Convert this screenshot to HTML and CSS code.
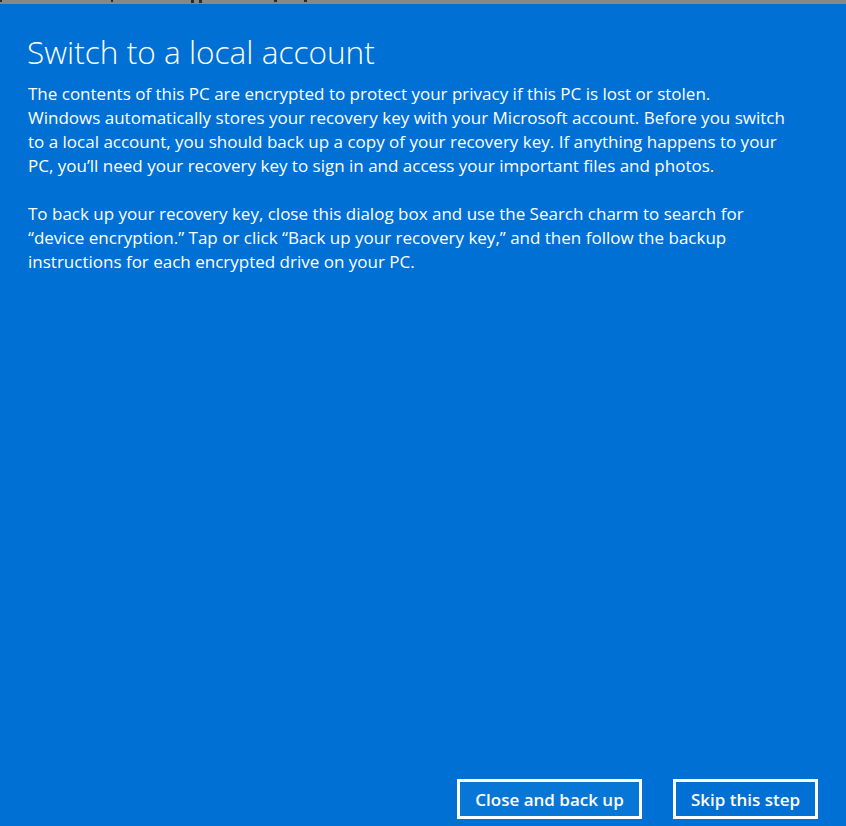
FILE: index.html
```html
<!DOCTYPE html>
<html lang="en">
<head>
<meta charset="utf-8">
<title>Switch to a local account</title>
<link rel="stylesheet" href="styles.css">
</head>
<body>
<div class="topstrip">
  <span class="mark m1"></span>
  <span class="mark m2"></span>
  <span class="mark m3"></span>
  <span class="mark m4"></span>
  <span class="mark m5"></span>
  <span class="mark m6"></span>
</div>
<main class="dialog">
  <h1 class="title">Switch to a local account</h1>
  <div class="content">
    <p>The contents of this PC are encrypted to protect your privacy if this PC is lost or stolen.<br>Windows automatically stores your recovery key with your Microsoft account. Before you switch to a local account, you should back up a copy of your recovery key. If anything happens to your PC, you’ll need your recovery key to sign in and access your important files and photos.</p>
    <p>To back up your recovery key, close this dialog box and use the Search charm to search for “device encryption.” Tap or click “Back up your recovery key,” and then follow the backup instructions for each encrypted drive on your PC.</p>
  </div>
  <div class="actions">
    <button class="btn btn-primary">Close and back up</button>
    <button class="btn btn-secondary">Skip this step</button>
  </div>
</main>
</body>
</html>
```

FILE: styles.css
```css
* { box-sizing: border-box; }
html, body { margin: 0; padding: 0; }
body {
  width: 846px;
  height: 826px;
  overflow: hidden;
  background: #0070d5;
  font-family: "Open Sans", "Noto Sans", sans-serif;
  color: #fff;
}
.topstrip {
  height: 4px;
  background: #888888;
  display: flex;
  align-items: flex-start;
}
.mark { display: block; height: 2px; background: #2a2a2a; }
.m1 { width: 2px; margin-left: 0; }
.m2 { width: 2px; margin-left: 109px; }
.m3 { width: 3px; margin-left: 78px; height: 3px; }
.m4 { width: 3px; margin-left: 5px; height: 3px; }
.m5 { width: 3px; margin-left: 72px; }
.m6 { width: 3px; margin-left: 27px; }
.dialog {
  height: 822px;
  display: flex;
  flex-direction: column;
  padding: 28px 28px 7px 27px;
}
.title {
  margin: 0;
  font-weight: 300;
  font-size: 31.6px;
  line-height: 40px;
}
.content {
  flex: 1;
  max-width: 771px;
  margin-top: 10px;
  padding-left: 1px;
  font-size: 17px;
  line-height: 24px;
}
.content p { margin: 0 0 24px 0; }
.actions {
  display: flex;
  justify-content: flex-end;
  gap: 31px;
}
.btn {
  height: 40px;
  border: 3px solid #fff;
  background: transparent;
  color: #fff;
  font-family: inherit;
  font-size: 17px;
  font-weight: 600;
  padding: 0 10px;
  white-space: nowrap;
}
.btn-primary { background: #0777d7; width: 185px; }
.btn-secondary { width: 145px; }
```
